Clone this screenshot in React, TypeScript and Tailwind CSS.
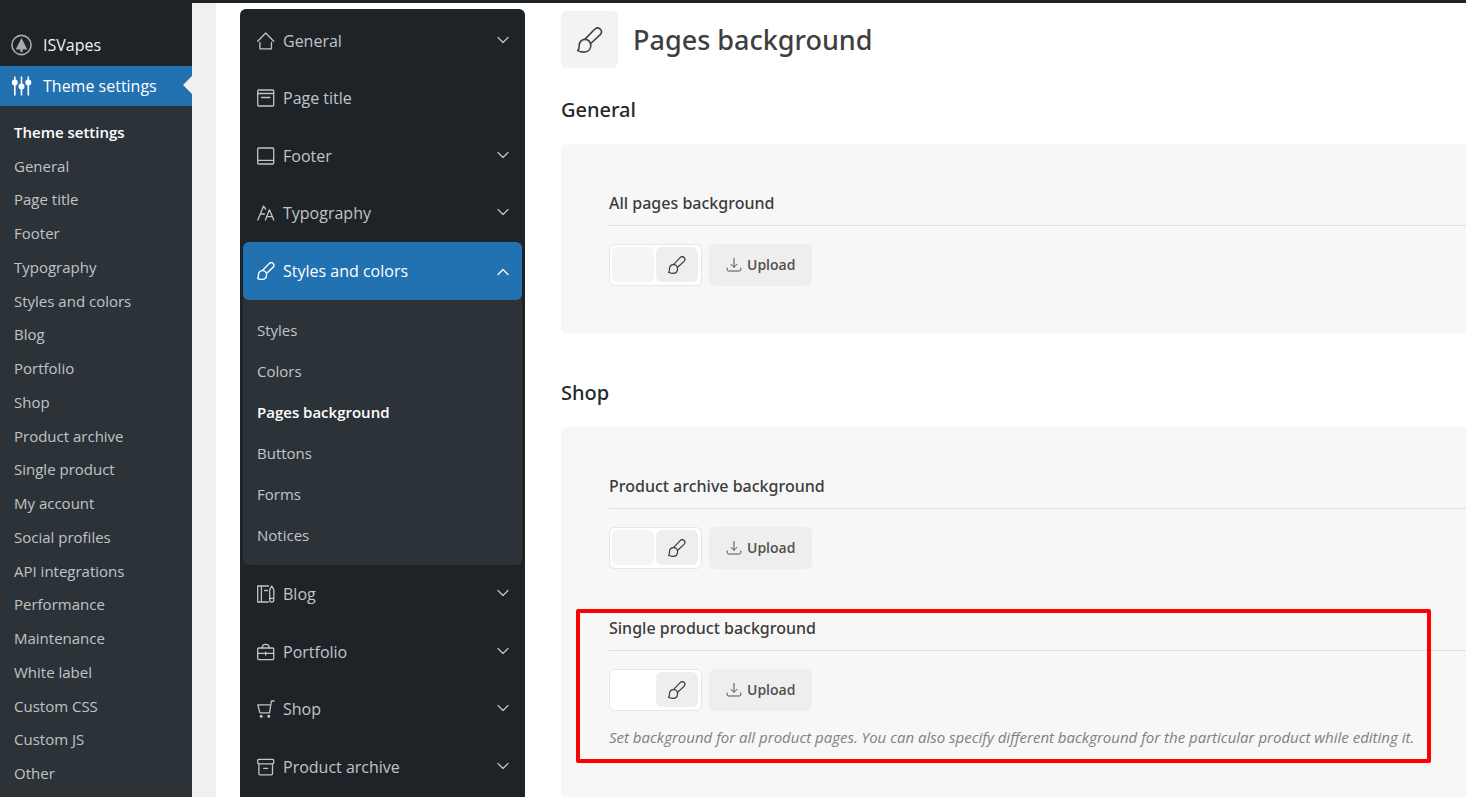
import { useState } from "react";
import type { ReactNode } from "react";
import clsx from "clsx";

const adminLinks = [
  "Theme settings",
  "General",
  "Page title",
  "Footer",
  "Typography",
  "Styles and colors",
  "Blog",
  "Portfolio",
  "Shop",
  "Product archive",
  "Single product",
  "My account",
  "Social profiles",
  "API integrations",
  "Performance",
  "Maintenance",
  "White label",
  "Custom CSS",
  "Custom JS",
  "Other",
];

const styleLinks = ["Styles", "Colors", "Pages background", "Buttons", "Forms", "Notices"];

function Icon({ children }: { children: ReactNode }) {
  return (
    <svg
      width="18"
      height="18"
      viewBox="0 0 18 18"
      fill="none"
      stroke="currentColor"
      strokeWidth="1.3"
      strokeLinecap="round"
      strokeLinejoin="round"
      className="shrink-0"
      aria-hidden="true"
    >
      {children}
    </svg>
  );
}

const HomeIcon = (
  <Icon>
    <path d="M.7 9.3 8.7 1l8 8.3M2.9 10.5v6.3h11.6v-6.3" />
  </Icon>
);

const PageTitleIcon = (
  <Icon>
    <rect x=".7" y="1" width="16" height="16" rx="1" />
    <path d="M.7 4.5h16M4.5 8.5h8.4" />
  </Icon>
);

const FooterIcon = (
  <Icon>
    <rect x=".7" y="1" width="16" height="16" rx="1" />
    <path d="M.7 13.4h16" />
  </Icon>
);

const TypographyIcon = (
  <Icon>
    <path d="M.8 16 6.6 2l2 3.2M3.2 10h4.2M8.4 16l4-10.2L16.8 16M10 12.6h5" />
  </Icon>
);

const BlogIcon = (
  <Icon>
    <path d="M11.6 1H.7v16h10.6M4.4 1v16M7.6 5.5h3" />
    <path d="M12.7 13.4V4.6L14.8 1l2 3.6V15a2 2 0 0 1-4.1 0v-1.6h4.1" />
  </Icon>
);

const PortfolioIcon = (
  <Icon>
    <rect x=".7" y="5" width="16" height="11.6" rx="1" />
    <path d="M5.1 5c.2-2.4 1.5-3.6 3.6-3.6s3.4 1.2 3.6 3.6M.7 10.3h16M8.7 9v3" />
  </Icon>
);

const ShopIcon = (
  <Icon>
    <path d="M17 1h-2.6l-1.9 11.8H3L.8 4.8h12.9" />
    <circle cx="4.2" cy="16.3" r=".9" fill="currentColor" />
    <circle cx="11.8" cy="16.3" r=".9" fill="currentColor" />
  </Icon>
);

const ArchiveIcon = (
  <Icon>
    <rect x=".7" y="1.4" width="16" height="4.4" rx="1" />
    <path d="M1.9 5.8v10a1 1 0 0 0 1 1h11.6a1 1 0 0 0 1-1v-10M6.7 10.3h4" />
  </Icon>
);

function BrushIcon({ size, stroke }: { size: number; stroke: number }) {
  return (
    <svg
      width={size}
      height={size}
      viewBox="0 0 26 26"
      fill="none"
      stroke="currentColor"
      strokeWidth={stroke}
      strokeLinejoin="round"
      className="shrink-0"
      aria-hidden="true"
    >
      <path d="M7.8 12.4 17.9 2a3.9 3.9 0 0 1 5.6 5.4L13.2 17" />
      <path d="M2.2 18.5c0-3.5 2.5-6.1 5.8-6.1s5.8 2.6 5.8 5.9c0 4.2-2.8 6.8-6.8 6.8-2.4 0-4.4-.3-6.2-1.5C1.7 22.6 2.2 21 2.2 18.5Z" />
    </svg>
  );
}

function UploadIcon() {
  return (
    <svg width="16" height="16" viewBox="0 0 16 16" fill="none" stroke="currentColor" strokeLinecap="round" strokeLinejoin="round" aria-hidden="true">
      <path d="M8 1.5v8.6M5 7.3l3 3 3-3M1.2 11v1.5A1.5 1.5 0 0 0 2.700 14h10.600a1.500 1.500 0 0 0 1.500-1.500V11" />
    </svg>
  );
}

function Chevron({ up }: { up?: boolean }) {
  return (
    <svg
      width="12"
      height="8"
      viewBox="0 0 12 8"
      fill="none"
      stroke="currentColor"
      strokeWidth="1.2"
      strokeLinecap="round"
      strokeLinejoin="round"
      className={clsx("ml-auto shrink-0", up ? "mt-0.5" : "mb-0.5")}
      aria-hidden="true"
    >
      <path d={up ? "M1 6.5l5-5 5 5" : "M1 1.5l5 5 5-5"} />
    </svg>
  );
}

function AdminSidebar() {
  return (
    <aside className="flex w-48 shrink-0 flex-col bg-[#2c3338]">
      <div className="bg-[#1d2327] pt-6">
        <a href="#isvapes" className="flex h-[42px] items-center gap-[11px] pl-2.5 text-base text-[#f0f0f1]">
          <svg width="22" height="22" viewBox="0 0 22 22" fill="none" aria-hidden="true">
            <circle cx="11.5" cy="11" r="9.6" stroke="#a7aaad" strokeWidth="1.6" />
            <path d="M11.5 4 17.3 15.6h-4.6V18h-2.4v-2.4H5.7Z" fill="#a7aaad" />
          </svg>
          ISVapes
        </a>
      </div>
      <a href="#theme" className="relative flex h-10 items-center gap-[11px] bg-[#2271b1] pl-2.5 text-base text-white">
        <svg width="22" height="22" viewBox="0 0 22 22" fill="none" stroke="#fff" strokeWidth="1.6" aria-hidden="true">
          <path d="M4.8 1.5v19M11.5 1.5v19M18.3 1.5v19" />
          <g fill="#fff" stroke="none">
            <circle cx="4.8" cy="7.5" r="3" />
            <circle cx="11.5" cy="11.5" r="3" />
            <circle cx="18.3" cy="7.5" r="3" />
          </g>
        </svg>
        Theme settings
        <span className="absolute top-2.5 right-0 border-y-[9px] border-r-[9px] border-y-transparent border-r-[#f0f0f1]" />
      </a>
      <ul className="flex flex-1 flex-col pt-[9px] pb-[7px] text-[15px] text-[#c0c3c6]">
        {adminLinks.map((label, i) => (
          <li key={label} className="flex flex-1 items-center pl-3.5">
            <a href="#theme" className={clsx("leading-5", i === 0 ? "font-semibold text-white" : "hover:text-[#72aee6]")}>
              {label}
            </a>
          </li>
        ))}
      </ul>
    </aside>
  );
}

function MenuItem({ icon, label, arrow = true }: { icon: ReactNode; label: string; arrow?: boolean }) {
  return (
    <li className="flex">
      <button type="button" className="flex flex-1 items-center gap-2 pr-[13px] pl-3.5 text-left text-base text-[#c3c4c7] hover:text-white">
        {icon}
        <span>{label}</span>
        {arrow && <Chevron />}
      </button>
    </li>
  );
}

function SettingsMenu() {
  const [open, setOpen] = useState(true);

  return (
    <nav className="w-[285px] shrink-0 rounded-t-md bg-[#1d2327] p-[3px]">
      <ul className="grid h-[230px] grid-rows-4">
        <MenuItem icon={HomeIcon} label="General" />
        <MenuItem icon={PageTitleIcon} label="Page title" arrow={false} />
        <MenuItem icon={FooterIcon} label="Footer" />
        <MenuItem icon={TypographyIcon} label="Typography" />
      </ul>

      <div className="rounded-md bg-[#2c3338]">
        <button
          type="button"
          aria-expanded={open}
          onClick={() => setOpen((v) => !v)}
          className="flex h-[58px] w-full items-center gap-2 rounded-md bg-[#2271b1] pr-[13px] pl-3.5 text-left text-base text-white"
        >
          <BrushIcon size={18} stroke={2} />
          <span>Styles and colors</span>
          <Chevron up={open} />
        </button>
        {open && (
          <ul className="pt-2.5 pb-[9px] text-[15px] text-[#c3c4c7]">
            {styleLinks.map((label) => (
              <li key={label} className="flex h-[41px] items-center px-3.5">
                <a href="#styles" className={label === "Pages background" ? "font-semibold text-white" : "hover:text-white"}>
                  {label}
                </a>
              </li>
            ))}
          </ul>
        )}
      </div>

      <ul className="grid h-[231px] grid-rows-4">
        <MenuItem icon={BlogIcon} label="Blog" />
        <MenuItem icon={PortfolioIcon} label="Portfolio" />
        <MenuItem icon={ShopIcon} label="Shop" />
        <MenuItem icon={ArchiveIcon} label="Product archive" />
      </ul>
    </nav>
  );
}

type FieldProps = {
  title: string;
  swatch: string;
  note?: string;
  marked?: boolean;
};

function BackgroundField({ title, swatch, note, marked }: FieldProps) {
  return (
    <div className="relative">
      <h3 className="border-b border-[#dedede] pb-[11px] font-['Noto_Sans',sans-serif] text-base leading-[22px] font-medium text-[#3c3c3c]">
        {title}
      </h3>
      <div className="mt-[18px] flex gap-[7px]">
        <div className="flex h-[42px] gap-0.5 rounded-md border border-[#e6e6e6] bg-white pt-0.5 pr-[3px] pb-[3px] pl-0.5">
          <span className={clsx("w-[42px] rounded-md", swatch)} />
          <button
            type="button"
            aria-label={`Pick color: ${title}`}
            className="flex w-[42px] items-center justify-center rounded-md bg-[#eeeeee] text-[#3c3c3c]"
          >
            <BrushIcon size={18} stroke={1.8} />
          </button>
        </div>
        <button type="button" className="flex h-[42px] items-center gap-[5px] rounded-md bg-[#eeeeee] px-[17px] text-sm font-semibold text-[#50504f]">
          <UploadIcon />
          Upload
        </button>
      </div>
      {note && <p className="mt-3.5 mb-px text-[15px] leading-6 whitespace-nowrap text-[#7d8085] italic">{note}</p>}
      {marked && (
        <span className="pointer-events-none absolute -top-2 right-[35px] -bottom-[13px] -left-[33px] rounded-xs border-4 border-[#ff0000]" />
      )}
    </div>
  );
}

function Section({ title, children }: { title: string; children: ReactNode }) {
  return (
    <section>
      <h2 className="font-['Noto_Sans',sans-serif] text-xl leading-8 font-medium text-[#23282d]">{title}</h2>
      <div className="mt-[18px] flex flex-col gap-12 rounded-l-md bg-[#f7f7f7] py-12 pl-12">{children}</div>
    </section>
  );
}

export default function App() {
  return (
    <div className="flex h-screen overflow-hidden bg-white font-['Open_Sans','Noto_Sans',sans-serif]">
      <AdminSidebar />
      <div className="flex min-w-0 flex-1 border-t-[3px] border-[#1d2327]">
        <div className="w-6 shrink-0 bg-[#f0f0f1]" />
        <div className="flex min-w-0 flex-1 pt-1.5 pl-6">
          <SettingsMenu />
          <main className="ml-9 min-w-0 flex-1 pt-0.5">
            <header className="flex items-center gap-[15px]">
              <span className="flex size-[57px] items-center justify-center rounded-md bg-[#f3f3f3] text-[#3c434a]">
                <BrushIcon size={26} stroke={1.6} />
              </span>
              <h1 className="font-['Noto_Sans',sans-serif] text-[27px] leading-9 font-medium text-[#3f3f3f]">Pages background</h1>
            </header>
            <div className="mt-[26px] flex flex-col gap-[43px]">
              <Section title="General">
                <BackgroundField title="All pages background" swatch="bg-[#f5f5f5]" />
              </Section>
              <Section title="Shop">
                <BackgroundField title="Product archive background" swatch="bg-[#f5f5f5]" />
                <BackgroundField
                  title="Single product background"
                  swatch="bg-white"
                  note="Set background for all product pages. You can also specify different background for the particular product while editing it."
                  marked
                />
              </Section>
            </div>
          </main>
        </div>
      </div>
    </div>
  );
}
